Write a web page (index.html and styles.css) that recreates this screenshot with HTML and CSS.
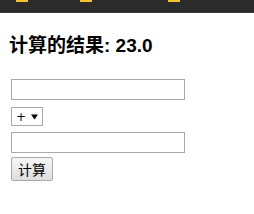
FILE: index.html
```html
<!DOCTYPE html>
<html lang="zh">
<head>
<meta charset="utf-8">
<link rel="stylesheet" href="styles.css">
</head>
<body>
<div class="topbar">
  <span class="mark m1"></span>
  <span class="mark m2"></span>
  <span class="mark m3"></span>
</div>
<main class="content">
  <h1 class="result">计算的结果: 23.0</h1>
  <form class="calc">
    <input class="num" type="text">
    <div class="op"><span class="plus">+</span><svg class="arrow" width="7" height="6" viewBox="0 0 7 6"><path d="M0 0.5 H7 L3.5 5.5 Z" fill="#000"/></svg></div>
    <input class="num" type="text">
    <button class="go" type="button">计算</button>
  </form>
</main>
</body>
</html>
```
FILE: styles.css
```css
html, body {
  margin: 0;
  padding: 0;
  background: #ffffff;
}
body {
  font-family: "Liberation Sans", "Noto Sans CJK SC", sans-serif;
  color: #000;
}
.topbar {
  height: 12px;
  background: #2b2b2b;
  border-bottom: 1px solid #3c3c3c;
  display: flex;
}
.mark {
  display: block;
  width: 12px;
  height: 2px;
  background: #f2c12e;
}
.m1 { margin-left: 16px; }
.m2 { margin-left: 52px; }
.m3 { margin-left: 76px; }
.content {
  padding: 0 0 0 9px;
}
.result {
  margin: 21px 0 0 0;
  font-size: 19px;
  font-weight: bold;
  line-height: 23px;
}
.calc {
  display: flex;
  flex-direction: column;
  align-items: flex-start;
  margin: 22px 0 0 2px;
}
.num {
  box-sizing: border-box;
  width: 174px;
  height: 21px;
  border: 1px solid #a9a9a9;
  padding: 0;
  margin: 0;
}
.op {
  box-sizing: border-box;
  margin-top: 7px;
  margin-bottom: 6px;
  width: 32px;
  height: 19px;
  border: 1px solid #a9a9a9;
  display: flex;
  align-items: center;
  padding-left: 4px;
  gap: 5px;
}
.plus {
  line-height: 14px;
  font-family: "DejaVu Sans", sans-serif;
  font-size: 12px;
}
.arrow {
  display: block;
}
.go {
  box-sizing: border-box;
  margin-top: 4px;
  width: 42px;
  height: 24px;
  border: 1px solid #a9a9a9;
  border-radius: 2px;
  background: linear-gradient(#f6f6f6, #dedede);
  font-family: "Noto Sans CJK SC", sans-serif;
  font-size: 14px;
  padding: 0;
  line-height: 22px;
  color: #000;
}
```
